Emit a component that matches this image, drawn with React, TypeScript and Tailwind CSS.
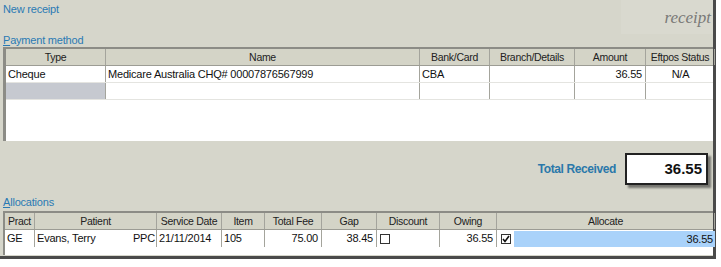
const font = { fontFamily: '"Liberation Sans", Arial, sans-serif' }

const payCols = [
  { label: 'Type', w: 100 },
  { label: 'Name', w: 314 },
  { label: 'Bank/Card', w: 70 },
  { label: 'Branch/Details', w: 85 },
  { label: 'Amount', w: 71 },
  { label: 'Eftpos Status', w: 69 },
]

const allocCols = [
  { label: 'Pract', w: 30 },
  { label: 'Patient', w: 122 },
  { label: 'Service Date', w: 65 },
  { label: 'Item', w: 43 },
  { label: 'Total Fee', w: 57 },
  { label: 'Gap', w: 55 },
  { label: 'Discount', w: 63 },
  { label: 'Owing', w: 57 },
  { label: 'Allocate', w: 218 },
]

function HeaderRow({ cols }: { cols: { label: string; w: number }[] }) {
  return (
    <div className="flex h-[17px] bg-[#d4d4c7] border-b border-[#9c9c94]">
      {cols.map((c) => (
        <div
          key={c.label}
          style={{ width: c.w }}
          className="shrink-0 border-r border-[#a4a49c] text-center text-[10.5px] tracking-[-0.3px] leading-[17px] text-[#222] whitespace-nowrap overflow-hidden"
        >
          {c.label}
        </div>
      ))}
    </div>
  )
}

function Checkbox({ checked }: { checked?: boolean }) {
  return (
    <div className="w-[10px] h-[10px] border border-[#333] bg-white flex items-center justify-center">
      {checked && (
        <svg width="8" height="8" viewBox="0 0 8 8">
          <path d="M1 4 L3 6.5 L7 1" stroke="#111" strokeWidth="1.6" fill="none" />
        </svg>
      )}
    </div>
  )
}

export default function App() {
  return (
    <div className="w-[721px] h-[267px] bg-white overflow-hidden" style={font}>
      <div className="w-[716px] h-[259px] bg-[#d6d6cb] border-r-[3px] border-b-[3px] border-[#4a4a4a] flex flex-col">
        {/* top header */}
        <div className="flex h-[34px]">
          <div className="pl-[3px] pt-[1px] text-[11px] tracking-[-0.2px] text-[#2a7ab4]">New receipt</div>
          <div className="ml-auto w-[92px] bg-[#d9d9cf] text-right pr-[2px] pt-[5px]">
            <span
              className="text-[17px] italic text-[#7a7a78]"
              style={{ fontFamily: '"Liberation Serif", "Times New Roman", serif' }}
            >
              receipt
            </span>
          </div>
        </div>
        <div className="h-[12px] pl-[3px] text-[11px] tracking-[-0.2px] leading-[12px] text-[#2a7ab4]">
          <span className="underline">P</span>ayment method
        </div>

        {/* payment grid */}
        <div className="ml-[3px] mt-[1px] h-[94px] bg-white border-t-2 border-l-[3px] border-[#8c8c86] flex flex-col">
          <HeaderRow cols={payCols} />
          <div className="flex h-[17px] border-b border-[#e4e4e0] text-[11px] tracking-[-0.2px] leading-[16px] text-[#111]">
            <div className="w-[100px] shrink-0 border-r border-[#a4a49c] pl-[2px]">Cheque</div>
            <div className="w-[314px] shrink-0 border-r border-[#a4a49c] pl-[2px]">Medicare Australia CHQ# 00007876567999</div>
            <div className="w-[70px] shrink-0 border-r border-[#a4a49c] pl-[2px]">CBA</div>
            <div className="w-[85px] shrink-0 border-r border-[#a4a49c]" />
            <div className="w-[71px] shrink-0 border-r border-[#a4a49c] text-right pr-[3px]">36.55</div>
            <div className="w-[69px] shrink-0 text-center">N/A</div>
          </div>
          <div className="flex h-[17px] border-b border-[#e4e4e0]">
            <div className="w-[100px] shrink-0 border-r border-[#a4a49c] bg-[#c6c9d0]" />
            <div className="w-[314px] shrink-0 border-r border-[#a4a49c]" />
            <div className="w-[70px] shrink-0 border-r border-[#a4a49c]" />
            <div className="w-[85px] shrink-0 border-r border-[#a4a49c]" />
            <div className="w-[71px] shrink-0 border-r border-[#a4a49c]" />
            <div className="w-[69px] shrink-0" />
          </div>
        </div>

        {/* total */}
        <div className="flex items-center justify-end h-[50px] pr-[5px] pt-[6px]">
          <div className="text-[12px] font-bold text-[#2a78aa] mr-[9px] tracking-[-0.4px]">Total Received</div>
          <div className="w-[83px] h-[32px] bg-white border-2 border-[#222] shadow-[3px_3px_2px_rgba(0,0,0,0.45)] text-right pr-[4px] text-[15px] font-bold leading-[28px] text-[#111]">
            36.55
          </div>
        </div>

        <div className="h-[12px] mt-[5px] pl-[3px] text-[11px] tracking-[-0.2px] leading-[12px] text-[#2a7ab4]">
          <span className="underline">A</span>llocations
        </div>

        {/* allocations grid */}
        <div className="ml-[3px] mt-[3px] h-[44px] bg-white border-t-2 border-l-2 border-[#8c8c86] flex flex-col">
          <HeaderRow cols={allocCols} />
          <div className="flex h-[17px] text-[11px] tracking-[-0.2px] leading-[16px] text-[#111]">
            <div className="w-[30px] shrink-0 border-r border-[#a4a49c] pl-[2px]">GE</div>
            <div className="w-[122px] shrink-0 border-r border-[#a4a49c] pl-[2px] pr-[1px] flex justify-between">
              <span>Evans, Terry</span>
              <span>PPC</span>
            </div>
            <div className="w-[65px] shrink-0 border-r border-[#a4a49c] pl-[2px]">21/11/2014</div>
            <div className="w-[43px] shrink-0 border-r border-[#a4a49c] pl-[2px]">105</div>
            <div className="w-[57px] shrink-0 border-r border-[#a4a49c] text-right pr-[3px]">75.00</div>
            <div className="w-[55px] shrink-0 border-r border-[#a4a49c] text-right pr-[3px]">38.45</div>
            <div className="w-[63px] shrink-0 border-r border-[#a4a49c] pl-[3px] flex items-center">
              <Checkbox />
            </div>
            <div className="w-[57px] shrink-0 border-r border-[#a4a49c] text-right pr-[3px]">36.55</div>
            <div className="w-[218px] shrink-0 flex items-center pl-[4px]">
              <Checkbox checked />
              <div className="ml-[3px] flex-1 h-[16px] bg-[#a9d2fa] text-right pr-[2px]">36.55</div>
            </div>
          </div>
        </div>
      </div>
    </div>
  )
}
